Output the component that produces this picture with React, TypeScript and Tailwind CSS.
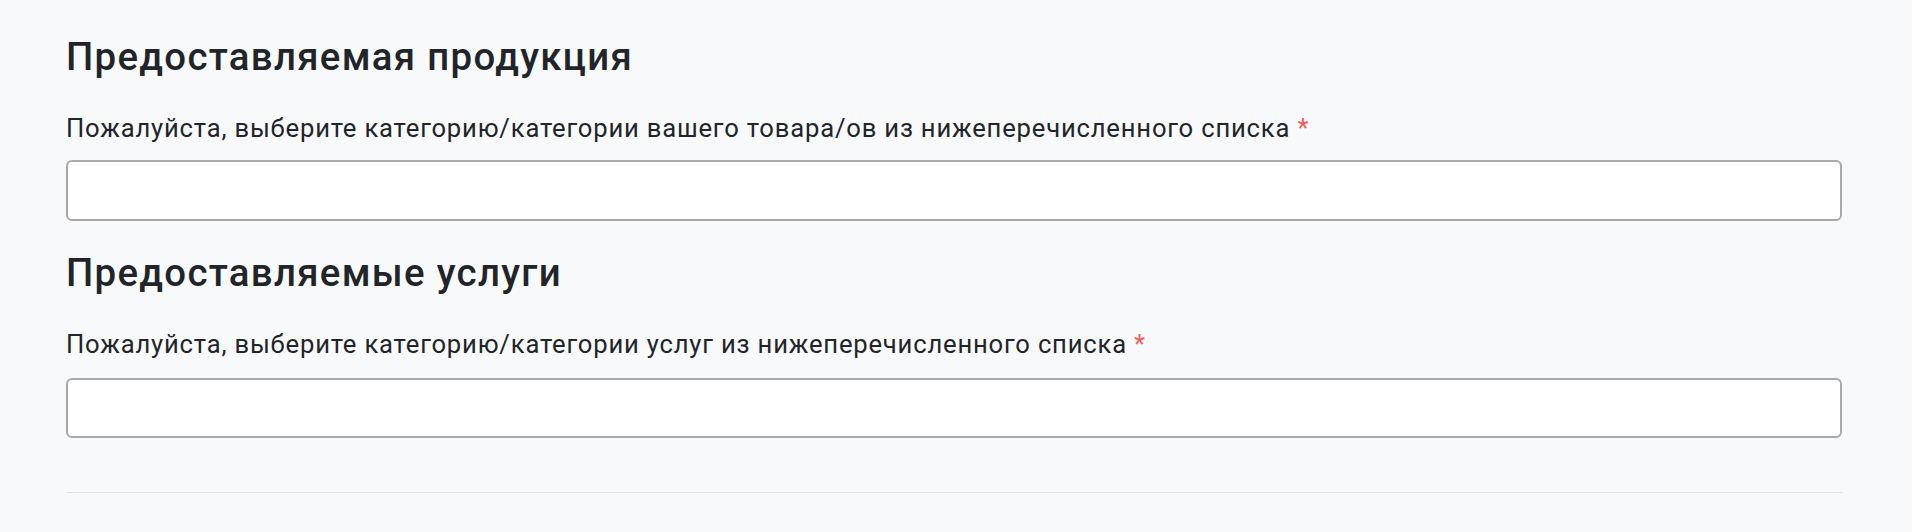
import React from "react";

function Field({ title, label, first }: { title: string; label: string; first?: boolean }) {
  return (
    <div className={first ? "flex flex-col" : "flex flex-col mt-[29px]"}>
      <h2 className="text-[38.4px] leading-[46px] font-medium tracking-[0.034em] text-[#212529]">{title}</h2>
      <label className="mt-[29px] text-[25.6px] leading-[38px] tracking-[0.032em] text-[#212529]">
        {label} <span className="text-[#f25c5c]">*</span>
      </label>
      <div className={first ? "mt-[13px] h-[61px] rounded-[6px] border-2 border-[#a9a9a9] bg-white" : "mt-[15px] h-[60px] rounded-[6px] border-2 border-[#a9a9a9] bg-white"} />
    </div>
  );
}

export default function App() {
  return (
    <div
      className="w-[1912px] h-[532px] bg-[#f8f9fa] pl-[66px] pr-[70px] pt-[34px]"
      style={{ fontFamily: "Roboto, 'Noto Sans', sans-serif" }}
    >
      <Field
        first
        title="Предоставляемая продукция"
        label="Пожалуйста, выберите категорию/категории вашего товара/ов из нижеперечисленного списка"
      />
      <Field
        title="Предоставляемые услуги"
        label="Пожалуйста, выберите категорию/категории услуг из нижеперечисленного списка"
      />
      <div className="mt-[54px] h-px bg-[#dee2e6]" />
    </div>
  );
}
